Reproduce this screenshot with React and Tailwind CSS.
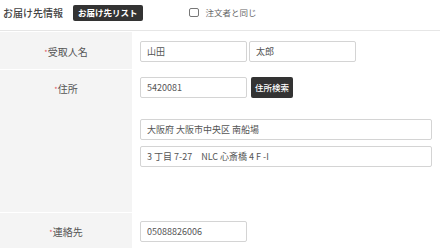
import { useState } from "react";

// Delivery address block: header with list button + "same as orderer", then label/field rows.

const FONT = { fontFamily: '"Noto Sans CJK JP", "Noto Sans", sans-serif' };

function Field({ value, className = "" }) {
  return (
    <input
      type="text"
      defaultValue={value}
      className={`block h-[21px] border border-[#d4d4d4] rounded-[2px] pl-[6px] text-[9px] text-[#555] bg-white outline-none ${className}`}
    />
  );
}

function Req({ children }) {
  return (
    <span className="text-[10px] text-[#555] leading-none">
      <span className="text-[#e0555a] text-[7px] align-[1px]">*</span>
      {children}
    </span>
  );
}

export default function App() {
  const [same, setSame] = useState(false);

  return (
    <div className="w-[440px] h-[248px] overflow-hidden bg-white" style={FONT}>

      {/* header */}
      <div className="h-[31px] pb-[5px] border-b border-[#e6e6e6] flex items-center pl-[3px]">
        <h2 className="text-[10px] text-[#444] font-medium">お届け先情報</h2>
        <button className="ml-[10px] h-[16px] px-[5px] bg-[#333] text-white text-[8.5px] font-bold rounded-[2px] leading-none">
          お届け先リスト
        </button>
        <label className="ml-[46px] flex items-center cursor-pointer">
          <span
            onClick={() => setSame(s => !s)}
            className={`w-[10px] h-[9px] border border-[#777] rounded-[2px] ${same ? "bg-[#333]" : "bg-white"}`}
          />
          <span className="ml-[7px] text-[8.5px] text-[#666]">注文者と同じ</span>
        </label>
      </div>

      <div className="mt-px">
        {/* name */}
        <div className="flex border-b border-white">
          <div className="w-[132px] shrink-0 bg-[#f4f4f4] h-[37px] flex items-center justify-center pt-[2px]">
            <Req>受取人名</Req>
          </div>
          <div className="flex items-start gap-[2px] pl-[8px] pt-[9px]">
            <Field value="山田" className="w-[107px]" />
            <Field value="太郎" className="w-[107px]" />
          </div>
        </div>

        {/* address */}
        <div className="flex border-b border-white">
          <div className="w-[132px] shrink-0 bg-[#f4f4f4] h-[142px] flex justify-center pt-[14px]">
            <Req>住所</Req>
          </div>
          <div className="flex flex-col items-start pl-[8px] pt-[7px]">
            <div className="flex gap-[4px]">
              <Field value="5420081" className="w-[107px]" />
              <button className="h-[21px] px-[4px] bg-[#333] text-white text-[8.5px] font-medium rounded-[2px] leading-none">
                住所検索
              </button>
            </div>
            <Field value="大阪府 大阪市中央区 南船場" className="w-[292px] mt-[21px]" />
            <Field value="3 丁目 7-27　NLC 心斎橋 4 F -I" className="w-[292px] mt-[6px]" />
          </div>
        </div>

        {/* contact */}
        <div className="flex">
          <div className="w-[132px] shrink-0 bg-[#f4f4f4] h-[40px] flex justify-center pt-[14px]">
            <Req>連絡先</Req>
          </div>
          <div className="flex items-start pl-[8px] pt-[8px]">
            <Field value="05088826006" className="w-[107px]" />
          </div>
        </div>
      </div>
    </div>
  );
}
